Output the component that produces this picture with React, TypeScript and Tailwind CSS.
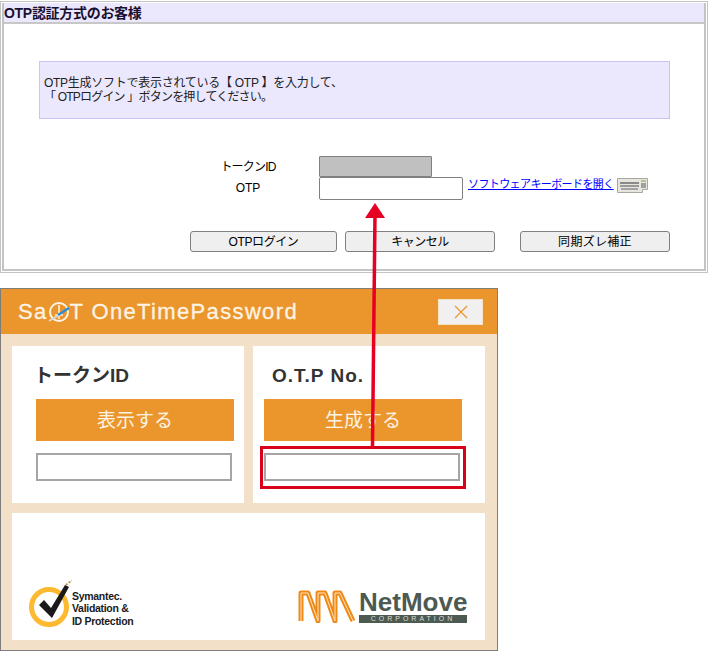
const font = "font-['Liberation_Sans','Noto_Sans_CJK_JP',sans-serif]";

function KeyboardIcon() {
  return (
    <svg width="31" height="17" viewBox="0 0 31 17" className="shrink-0">
      <path d="M0.5 1.5 H30.5 V12.5 H25.5 V15.5 H0.5 Z" fill="#e6e6de" stroke="#a8a8a0" />
      <rect x="3" y="5" width="19" height="2" fill="#8a8a8a" />
      <rect x="3" y="8" width="19" height="2" fill="#9a9a9a" />
      <rect x="4" y="11" width="17" height="2" fill="#a4a4a4" />
      <rect x="24" y="3" width="5" height="2" fill="#a8c890" />
      <rect x="24" y="6" width="5" height="5" fill="#a0a0a0" />
    </svg>
  );
}

function SymantecMark() {
  return (
    <svg width="44" height="48" viewBox="0 0 44 48" className="shrink-0">
      <circle cx="21" cy="27" r="17.5" fill="none" stroke="#fdb92f" strokeWidth="5" />
      <path d="M11 25 L16 20 L23 28 L37 5 L41 7 L24 38 Z" fill="#1a1a1a" />
      <path d="M38 5 L44 0" stroke="#b99a4a" strokeWidth="2" strokeDasharray="2 1.5" />
    </svg>
  );
}

function NetMoveMark() {
  const d = "M3 31 L3 3 L10 3 L20 31 L20 3 L27 3 L37 31 L37 3 L42 3 L55 31";
  return (
    <svg width="58" height="33" viewBox="0 0 58 33" className="shrink-0">
      <path d={d} fill="none" stroke="#ef8a17" strokeWidth="5" strokeLinejoin="round" />
      <path d={d} fill="none" stroke="#fde3c0" strokeWidth="1" />
    </svg>
  );
}

function SaaSLogoO() {
  return (
    <svg width="22" height="24" viewBox="0 0 22 24" className="shrink-0">
      <circle cx="11" cy="12" r="9" fill="none" stroke="#fdf3e4" strokeWidth="2" />
      <path d="M11 5 V19 M7 15 H15" stroke="#fdf3e4" strokeWidth="1.5" />
      <path d="M1 21 L11 15" stroke="#d8d8d8" strokeWidth="2" />
      <path d="M10 15 L21 8" stroke="#2b8fd8" strokeWidth="2.5" />
    </svg>
  );
}

function FormButton({ label, width, tracking }: { label: string; width: string; tracking: string }) {
  return (
    <button className={`${width} ${tracking} h-[21px] rounded-[3px] border border-[#808080] bg-[#efefef] text-xs text-black`}>
      {label}
    </button>
  );
}

function PanelCard({ title, action, inset, titleClass }: { title: string; action: string; inset: string; titleClass: string }) {
  return (
    <div className={`flex h-[157px] w-[232px] flex-col bg-white pt-[16px] ${inset}`}>
      <div className={`h-[37px] text-[19px] leading-[28px] font-bold text-[#333333] ${titleClass}`}>{title}</div>
      <div className="flex h-[42px] w-[198px] items-center justify-center bg-[#ea962c] pt-[3px] text-[19px] text-[#fdf3e4]">
        {action}
      </div>
      <div className="mt-[12px] h-[28px] w-[196px] border-2 border-[#a5a5a5] bg-white" />
    </div>
  );
}

export default function App() {
  return (
    <div className={`relative h-[651px] w-[709px] overflow-hidden bg-white ${font}`}>
      {/* Login form */}
      <div className="mt-[1px] h-[272px] w-[708px] border border-[#c4c4c4] p-[1px]">
        <div className="h-full border-2 border-t-0 border-[#c4c4c4]">
          <div className="flex h-[21px] items-center border-b-2 border-[#c8c8c8] bg-[#ebe8fd] text-[14px] leading-none font-bold tracking-[-0.3px] text-[#1a1030]">
            OTP認証方式のお客様
          </div>
          <div className="mx-[35px] mt-[37px] flex h-[58px] w-[631px] flex-col justify-center border border-[#c8c4f5] bg-[#ebe8fd] pl-[4px] text-xs leading-[14px] text-[#222222]">
            <div className="tracking-[-0.27px]">OTP生成ソフトで表示されている【 OTP 】を入力して、</div>
            <div className="tracking-[-0.8px]">「 OTPログイン 」ボタンを押してください。</div>
          </div>
          <div className="mt-[37px] flex flex-col pl-[185px]">
            <div className="flex h-[21px]">
              <div className="w-[130px] pr-[12px] text-center text-xs leading-[22px] tracking-[-0.8px] text-black">トークンID</div>
              <div className="h-[21px] w-[113px] rounded-[1px] border border-[#808080] bg-[#c0c0c0]" />
            </div>
            <div className="flex h-[23px] items-start">
              <div className="w-[130px] pr-[12px] text-center text-xs leading-[22px] text-black">OTP</div>
              <div className="h-[23px] w-[144px] rounded-[2px] border border-[#808080] bg-white" />
              <a href="#" className="ml-[5px] text-[11px] leading-[14px] tracking-[-0.6px] text-[#0000ff] underline">
                ソフトウェアキーボードを開く
              </a>
              <div className="ml-[3px]">
                <KeyboardIcon />
              </div>
            </div>
          </div>
          <div className="mt-[31px] flex pl-[186px]">
            <FormButton label="OTPログイン" width="w-[147px]" tracking="tracking-[-0.4px]" />
            <div className="w-[8px]" />
            <FormButton label="キャンセル" width="w-[150px]" tracking="tracking-[-0.5px]" />
            <div className="w-[25px]" />
            <FormButton label="同期ズレ補正" width="w-[150px]" tracking="tracking-[0.3px]" />
          </div>
        </div>
      </div>

      {/* OneTimePassword window */}
      <div className="mt-[15px] flex h-[363px] w-[498px] flex-col border border-[#7d7d7d] bg-[#f2e0c9]">
        <div className="flex h-[45px] shrink-0 items-center justify-between bg-[#ea962c] pr-[14px] pl-[17px]">
          <div className="flex items-center text-[22px] leading-none tracking-[1.35px] text-[#fdf3e4] [-webkit-text-stroke:0.3px_#fdf3e4]">
            <span>Sa</span>
            <SaaSLogoO />
            <span>T OneTimePassword</span>
          </div>
          <div className="flex h-[26px] w-[45px] items-center justify-center border border-[#f5e3c8] bg-[#f0f0f0]">
            <svg width="14" height="14" viewBox="0 0 14 14">
              <path d="M1 1 L13 13 M13 1 L1 13" stroke="#ea962c" strokeWidth="1.2" />
            </svg>
          </div>
        </div>
        <div className="flex gap-[9px] pt-[12px] pl-[11px]">
          <PanelCard title="トークンID" action="表示する" inset="pl-[24px]" titleClass="ml-[-2px]" />
          <PanelCard title="O.T.P No." action="生成する" inset="pl-[11px]" titleClass="ml-[8px] tracking-[1px]" />
        </div>
        <div className="mt-[10px] ml-[11px] flex h-[127px] w-[473px] items-end justify-between bg-white pr-[18px] pb-[12px] pl-[16px]">
          <div className="flex items-end">
            <SymantecMark />
            <div className="pb-[1px] text-[10.5px] leading-[12.5px] font-bold tracking-[-0.3px] text-[#1a1a1a]">
              <div>Symantec.</div>
              <div>Validation &amp;</div>
              <div>ID Protection</div>
            </div>
          </div>
          <div className="mb-[5px] flex items-end">
            <NetMoveMark />
            <div className="ml-[3px] flex w-[108px] flex-col">
              <div className="text-[26px] leading-[24px] font-bold text-[#4d5a52]">NetMove</div>
              <div className="mt-[1px] h-[8px] bg-[#4d5a52] text-center text-[7px] leading-[8px] tracking-[3px] text-[#d8dcd8]">
                CORPORATION
              </div>
            </div>
          </div>
        </div>
      </div>

      {/* Red callout over both panels */}
      <div className="absolute top-[446px] left-[260px] h-[43px] w-[206px] border-[3px] border-[#d9001b]" />
      <svg className="absolute top-0 left-0" width="709" height="651" viewBox="0 0 709 651">
        <path d="M375 214 L372.5 447" stroke="#e60023" strokeWidth="3.5" />
        <path d="M375 203 L385 218 L365 218 Z" fill="#e60023" />
      </svg>
    </div>
  );
}
